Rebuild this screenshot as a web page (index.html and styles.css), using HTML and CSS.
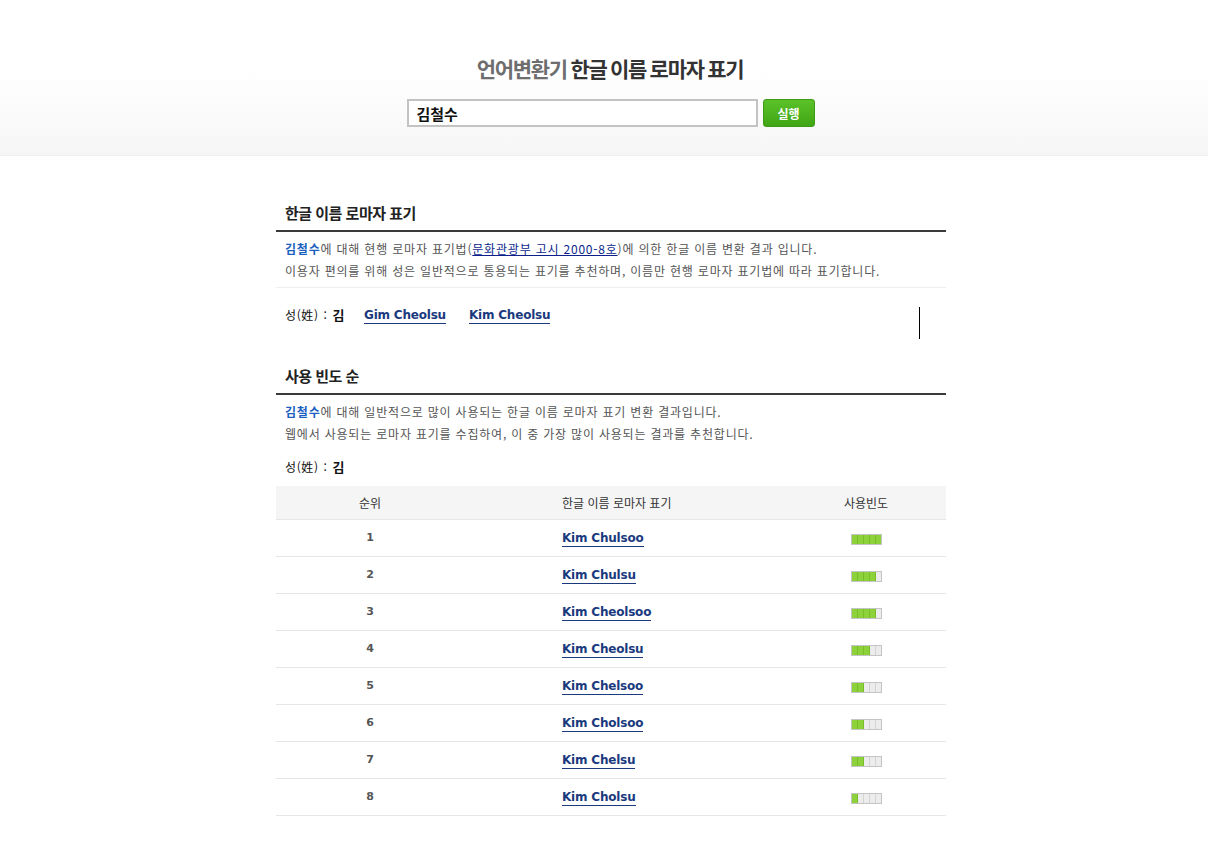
FILE: index.html
```html
<!DOCTYPE html>
<html lang="ko">
<head>
    <meta charset="UTF-8">
    <meta name="viewport" content="width=device-width, initial-scale=1.0">
    <title>언어변환기 한글 이름 로마자 표기</title>
    <link rel="stylesheet" href="styles.css">
</head>
<body>
    <!-- Search header -->
    <div class="header">
        <h1 class="title"><span class="title-sub">언어변환기</span> 한글 이름 로마자 표기</h1>
        <form class="search" onsubmit="return false">
            <input type="text" class="search-input" value="김철수">
            <button type="submit" class="search-button">실행</button>
        </form>
    </div>

    <div class="wrap">
        <div class="content">
            <!-- Standard romanization -->
            <h2 class="section-title">한글 이름 로마자 표기</h2>
            <div class="desc">
                <p><strong class="name">김철수</strong>에 대해 현행 로마자 표기법(<a href="#" class="law">문화관광부 고시 2000-8호</a>)에 의한 한글 이름 변환 결과 입니다.</p>
                <p>이용자 편의를 위해 성은 일반적으로 통용되는 표기를 추천하며, 이름만 현행 로마자 표기법에 따라 표기합니다.</p>
            </div>
            <div class="result-row">
                <span class="surname">성(姓) : <b>김</b></span>
                <a href="#" class="roman">Gim Cheolsu</a>
                <a href="#" class="roman">Kim Cheolsu</a>
                <span class="caret"></span>
            </div>

            <!-- Frequency ranking -->
            <h2 class="section-title">사용 빈도 순</h2>
            <div class="desc">
                <p><strong class="name">김철수</strong>에 대해 일반적으로 많이 사용되는 한글 이름 로마자 표기 변환 결과입니다.</p>
                <p>웹에서 사용되는 로마자 표기를 수집하여, 이 중 가장 많이 사용되는 결과를 추천합니다.</p>
            </div>
            <div class="surname-line"><span class="surname">성(姓) : <b>김</b></span></div>

            <table class="rank">
                <thead>
                    <tr>
                        <th class="col-rank">순위</th>
                        <th class="col-name">한글 이름 로마자 표기</th>
                        <th class="col-freq">사용빈도</th>
                    </tr>
                </thead>
                <tbody id="rankBody"></tbody>
            </table>
        </div>
    </div>

    <script>
        // Ranking data: name and filled bar cells (out of 5)
        const ranks = [
            ['Kim Chulsoo', 5],
            ['Kim Chulsu', 4],
            ['Kim Cheolsoo', 4],
            ['Kim Cheolsu', 3],
            ['Kim Chelsoo', 2],
            ['Kim Cholsoo', 2],
            ['Kim Chelsu', 2],
            ['Kim Cholsu', 1]
        ];

        const body = document.getElementById('rankBody');
        ranks.forEach(function (item, i) {
            let cells = '';
            for (let c = 0; c < 5; c++) {
                cells += '<i class="' + (c < item[1] ? 'on' : '') + '"></i>';
            }
            const tr = document.createElement('tr');
            tr.innerHTML =
                '<td class="col-rank num">' + (i + 1) + '</td>' +
                '<td class="col-name"><a href="#" class="roman">' + item[0] + '</a></td>' +
                '<td class="col-freq"><span class="bar">' + cells + '</span></td>';
            body.appendChild(tr);
        });
    </script>
</body>
</html>
```

FILE: styles.css
```css
body {
    margin: 0;
    padding: 0;
    background-color: #fff;
    color: #555;
    font-family: 'Noto Sans CJK KR', 'Noto Sans', sans-serif;
    font-size: 12px;
}

a {
    text-decoration: none;
}

/* Header */
.header {
    height: 156px;
    border-bottom: 1px solid #f0f0f0;
    background: linear-gradient(#fff 0%, #fff 45%, #f6f6f6 100%);
    text-align: center;
    box-sizing: border-box;
    padding-top: 52px;
}

.title {
    margin: 0;
    padding-left: 12px;
    font-size: 21px;
    line-height: 32px;
    font-weight: bold;
    color: #333;
    letter-spacing: -1.3px;
    word-spacing: -1px;
}

.title-sub {
    color: #6e6e6e;
}

.search {
    display: flex;
    justify-content: center;
    gap: 5px;
    margin-top: 15px;
    padding-left: 13px;
}

.search-input {
    width: 351px;
    height: 28px;
    box-sizing: border-box;
    border: 2px solid #c3c3c3;
    padding: 0 8px;
    font-family: 'Noto Sans CJK KR', sans-serif;
    font-size: 15px;
    font-weight: bold;
    color: #111;
    outline: none;
}

.search-button {
    width: 52px;
    height: 28px;
    border: 1px solid #3c9a14;
    border-radius: 3px;
    background: linear-gradient(#5cc22a, #3fa514);
    color: #fff;
    font-family: 'Noto Sans CJK KR', sans-serif;
    font-size: 12px;
    font-weight: bold;
    cursor: pointer;
    padding: 0;
}

/* Content */
.wrap {
    width: 684px;
    margin: 0 auto;
    padding-left: 14px;
    box-sizing: border-box;
}

.content {
    width: 670px;
    padding-top: 47px;
}

.section-title {
    margin: 0;
    padding: 0 9px 7px;
    font-size: 15px;
    line-height: 20px;
    color: #222;
    border-bottom: 2px solid #3a3a3a;
    letter-spacing: -0.5px;
}

.desc {
    padding: 6px 9px 5px;
}

.desc p {
    margin: 0;
    line-height: 22px;
    letter-spacing: 0.8px;
    white-space: nowrap;
}

.name {
    color: #1a5fbf;
}

.law {
    color: #0c1f8c;
    text-decoration: underline;
}

.result-row {
    display: flex;
    align-items: flex-start;
    border-top: 1px solid #eee;
    padding: 19px 0 0 9px;
    height: 32px;
    line-height: 16px;
    margin-bottom: 27px;
}

.surname {
    color: #111;
    font-size: 12px;
    letter-spacing: 0.6px;
    word-spacing: 1px;
}

.surname b {
    font-size: 13px;
}

.result-row .roman {
    margin-left: 19px;
}

.result-row .roman + .roman {
    margin-left: 23px;
}

.roman {
    font-family: 'DejaVu Sans', Verdana, sans-serif;
    font-size: 12px;
    font-weight: bold;
    color: #1b3a7e;
    border-bottom: 1px solid #1b3a7e;
    letter-spacing: -0.2px;
}

.caret {
    margin-left: auto;
    margin-right: 26px;
    width: 1px;
    height: 32px;
    background: #000;
}

.surname-line {
    padding: 9px 9px 11px;
    line-height: 16px;
}

/* Ranking table */
.rank {
    width: 670px;
    border-collapse: collapse;
}

.rank th {
    height: 33px;
    background-color: #f5f5f5;
    font-weight: normal;
    color: #333;
    font-size: 12px;
    line-height: 16px;
    border-bottom: 1px solid #e6e6e6;
    padding: 0;
}

.rank td {
    height: 36px;
    border-bottom: 1px solid #e6e6e6;
    padding: 0;
    line-height: 14px;
    vertical-align: middle;
}

.rank .roman {
    display: inline-block;
    line-height: 15px;
}

.col-rank {
    width: 188px;
    text-align: center;
}

.col-name {
    width: 322px;
    text-align: left;
    padding-left: 98px !important;
    box-sizing: border-box;
}

.col-freq {
    width: 160px;
    text-align: center;
}

.num {
    font-family: 'DejaVu Sans', Verdana, sans-serif;
    font-weight: bold;
    font-size: 11px;
    color: #555;
}

.bar {
    display: inline-flex;
    vertical-align: middle;
    border: 1px solid #c4c4c4;
    background: #eee;
}

.bar i {
    width: 5px;
    height: 9px;
    border-right: 1px solid #d4d4d4;
    background: #ececec;
}

.bar i:last-child {
    border-right: none;
}

.bar i.on {
    background: #8ed23b;
    border-right-color: #79bd2a;
}
```
